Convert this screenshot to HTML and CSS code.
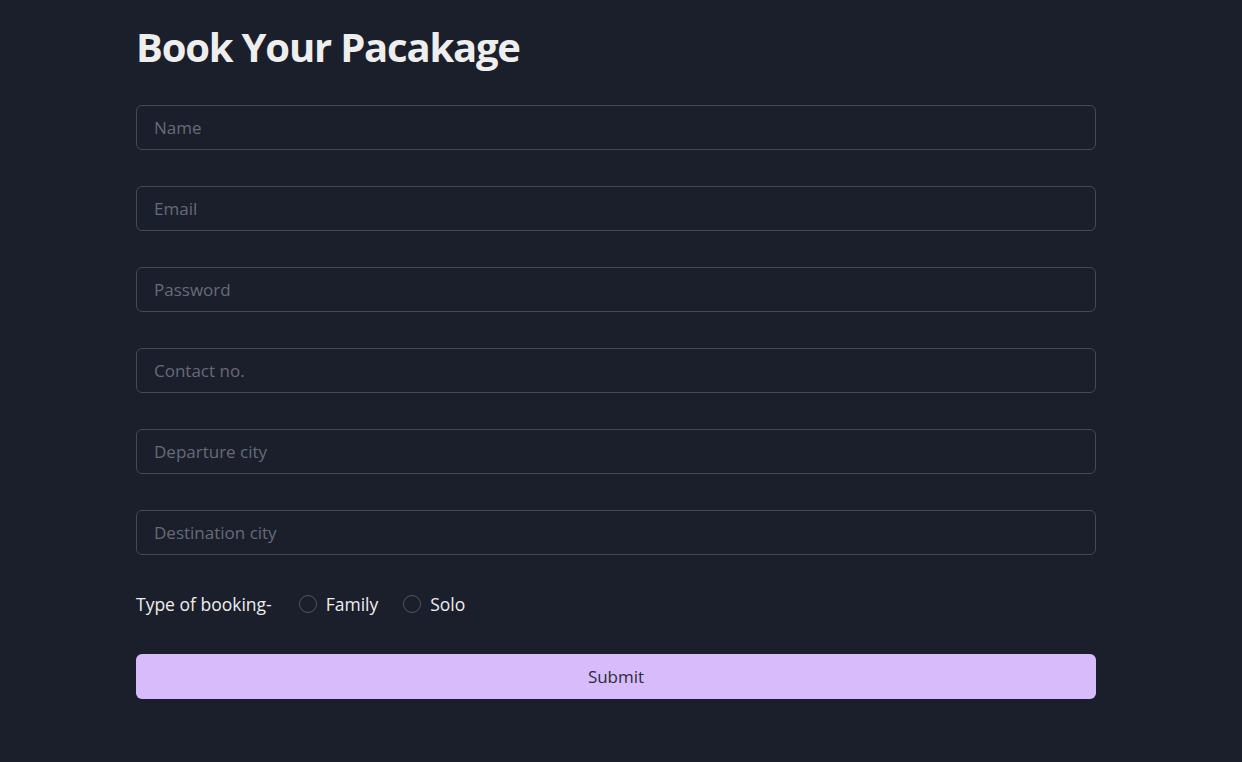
FILE: index.html
```html
<!DOCTYPE html>
<html lang="en">
<head>
<meta charset="utf-8">
<title>Book Your Pacakage</title>
<link rel="stylesheet" href="styles.css">
</head>
<body>
<main class="page">
  <h1 class="title">Book Your Pacakage</h1>
  <form class="form">
    <input class="field" type="text" placeholder="Name">
    <input class="field" type="email" placeholder="Email">
    <input class="field" type="password" placeholder="Password">
    <input class="field" type="text" placeholder="Contact no.">
    <input class="field" type="text" placeholder="Departure city">
    <input class="field" type="text" placeholder="Destination city">
    <div class="booking">
      <span class="booking-label">Type of booking-</span>
      <label class="option"><span class="radio"></span>Family</label>
      <label class="option"><span class="radio"></span>Solo</label>
    </div>
    <button class="submit" type="button">Submit</button>
  </form>
</main>
</body>
</html>
```
FILE: styles.css
```css
* { box-sizing: border-box; }
html, body {
  margin: 0;
  padding: 0;
  background: #1b1f2b;
  font-family: "Open Sans", "Noto Sans", sans-serif;
  color: #eeeeee;
}
.page {
  width: 960px;
  margin: 0 0 0 136px;
  padding-top: 20px;
}
.title {
  margin: 0;
  font-size: 40px;
  font-weight: 700;
  line-height: 54px;
  color: #eeeeee;
  letter-spacing: -1.2px;
}
.form {
  display: flex;
  flex-direction: column;
  margin-top: 31px;
}
.field {
  display: block;
  width: 100%;
  height: 45px;
  margin-bottom: 36px;
  padding: 0 17px;
  background: #1b1f2b;
  border: 1px solid #454955;
  border-radius: 6px;
  color: #e5e5e5;
  font-family: inherit;
  font-size: 17px;
  outline: none;
}
.field::placeholder { color: #666b77; }
.booking {
  display: flex;
  align-items: center;
  height: 24px;
  margin-top: 1px;
  font-size: 17.5px;
  color: #eeeeee;
}
.booking-label { margin-right: 27px; }
.option {
  display: flex;
  align-items: center;
  margin-right: 25px;
}
.radio {
  width: 18px;
  height: 18px;
  border: 1.5px solid #51555f;
  border-radius: 50%;
  margin-right: 9px;
}
.submit {
  margin-top: 38px;
  width: 100%;
  height: 45px;
  border: none;
  border-radius: 6px;
  background: #d7bbfa;
  color: #2b2d3a;
  font-family: inherit;
  font-size: 17px;
}
```
